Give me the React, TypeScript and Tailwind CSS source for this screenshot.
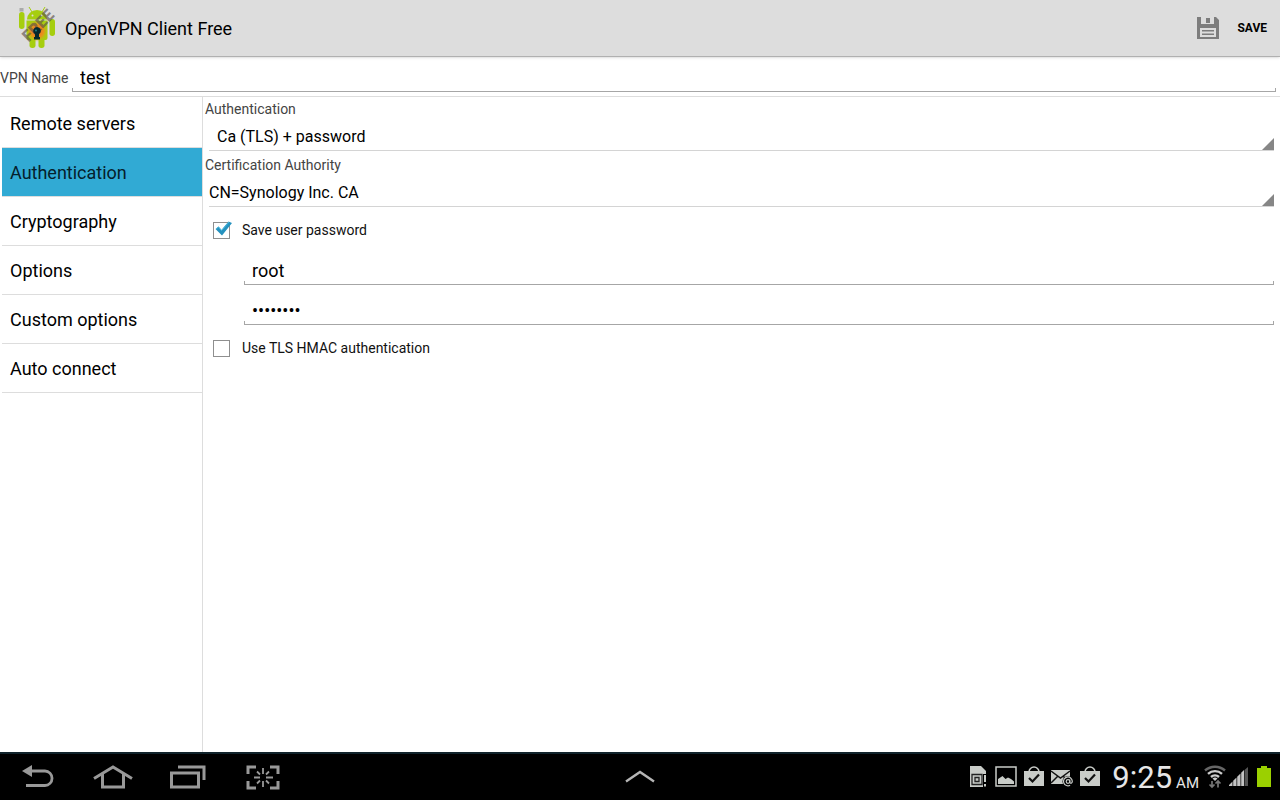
import { useState } from "react";
import type { ReactNode } from "react";

const sections = [
  "Remote servers",
  "Authentication",
  "Cryptography",
  "Options",
  "Custom options",
  "Auto connect",
];

function AppLogo() {
  return (
    <svg width="40" height="42" viewBox="0 0 40 42" aria-hidden="true">
      <defs>
        <radialGradient id="glow">
          <stop offset="0.2" stopColor="#f5761e" />
          <stop offset="0.6" stopColor="#f08a1c" stopOpacity="0.85" />
          <stop offset="1" stopColor="#c4c010" stopOpacity="0" />
        </radialGradient>
      </defs>
      <g fill="#a6ce0f">
        <path d="M10 12.500a10 9.500 0 0 1 20 0z" />
        <path d="M12 0l3 5M28 0l-3 5" stroke="#a6ce0f" strokeWidth="1" />
        <path d="M9.500 13.500h21V31a2 2 0 0 1-2 2h-17a2 2 0 0 1-2-2z" />
        <rect x="2" y="5" width="5.500" height="17" rx="2.700" />
        <rect x="32.500" y="12" width="5.500" height="17" rx="2.700" />
        <rect x="12.500" y="29" width="6" height="12" rx="2.700" />
        <rect x="21.500" y="29" width="6" height="12" rx="2.700" />
      </g>
      <circle cx="15.500" cy="8.500" r="1" fill="#ddd" />
      <circle cx="24.500" cy="8.500" r="1" fill="#ddd" />
      <rect x="2.500" y="1" width="4" height="3.500" fill="#aaa" />
      <circle cx="20" cy="24" r="11" fill="url(#glow)" />
      <text
        x="21"
        y="24"
        textAnchor="middle"
        transform="rotate(-45 21 18.500)"
        fontFamily="Roboto, sans-serif"
        fontWeight="900"
        fontSize="16"
        fill="#5a4f4a"
        fillOpacity="0.65"
      >
        FREE
      </text>
      <path
        d="M20 20a3.800 3.800 0 0 1 2 7V30h1v2.500h-6V30h1v-3a3.800 3.800 0 0 1 2-7z"
        fill="#06282c"
      />
      <circle cx="19" cy="23.500" r="1" fill="#1f7f86" />
    </svg>
  );
}

function SaveIcon() {
  return (
    <svg width="22" height="22" viewBox="0 0 22 22" aria-hidden="true">
      <path
        fill="#7d7d7d"
        fillRule="evenodd"
        d="M0 0h4v8h13V0h2l3 3v19H0zM3 11v9h16v-9z"
      />
      <path fill="#7d7d7d" d="M9 1h4v5H9zM4 7h13v2H4z" />
      <path fill="#7d7d7d" d="M5 13h12v1.500H5zM5 16.500h12V18H5z" />
    </svg>
  );
}

// Holo style underline with short upturned ends
function Underline() {
  return <span className="block h-1 border border-t-0 border-[#a6a6a6]" />;
}

function Spinner({
  id,
  label,
  options,
  inset,
}: {
  id: string;
  label: string;
  options: string[];
  inset?: boolean;
}) {
  return (
    <div>
      <label htmlFor={id} className="block pl-0.5 text-sm leading-5 text-[#444]">
        {label}
      </label>
      <div className="relative ml-1.5 border-b border-[#d4d4d4]">
        <select
          id={id}
          className={`block h-[31px] w-full appearance-none bg-transparent pt-1 text-base text-black outline-none ${
            inset ? "pl-2" : "pl-0"
          }`}
        >
          {options.map((option) => (
            <option key={option}>{option}</option>
          ))}
        </select>
        <svg
          className="pointer-events-none absolute right-0 bottom-0"
          width="12"
          height="12"
          viewBox="0 0 12 12"
        >
          <path d="M12 0v12H0z" fill="#868686" />
        </svg>
      </div>
    </div>
  );
}

function CheckRow({
  label,
  checked,
  onChange,
}: {
  label: string;
  checked: boolean;
  onChange: (value: boolean) => void;
}) {
  return (
    <label className="flex h-8 items-center gap-3 pl-2.5 text-sm text-[#111]">
      <span className="relative flex">
        <input
          type="checkbox"
          checked={checked}
          onChange={(e) => onChange(e.target.checked)}
          className="peer size-[17px] appearance-none border border-[#8f8f8f] bg-white"
        />
        <svg
          className="pointer-events-none absolute -top-0.5 left-0 hidden peer-checked:block"
          width="20"
          height="18"
          viewBox="0 0 20 18"
        >
          <path d="M2.500 9l3-2.500L8.500 10l7-8.500L19 3 9 15.500z" fill="#2592bf" />
          <path d="M3 9l2.500-2L8.500 10.500l7.500-8.500" fill="none" stroke="#4fb9de" />
        </svg>
      </span>
      {label}
    </label>
  );
}

function NavButton({ label, children }: { label: string; children: ReactNode }) {
  return (
    <button aria-label={label} className="flex h-full w-[75px] items-center justify-center">
      {children}
    </button>
  );
}

function BagIcon() {
  return (
    <svg width="20" height="22" viewBox="0 0 20 22">
      <path d="M5 6a5 5 0 0 1 10 0" fill="none" stroke="#c9ccc8" strokeWidth="1.500" />
      <path d="M0 5h20v15H0z" fill="#c9ccc8" />
      <path d="M5 12l3.500 3.500L15 8.500" fill="none" stroke="#111" strokeWidth="2.200" />
    </svg>
  );
}

function SystemBar() {
  return (
    <footer className="grid h-12 grid-cols-[1fr_auto_1fr] items-center border-t-2 border-[#10232b] bg-black">
      <div className="flex h-full items-center">
        <NavButton label="Back">
          <svg width="32" height="24" viewBox="0 0 32 24">
            <path d="M0 6L10 0v12z" fill="#999" />
            <path d="M9 6h14a7 7.200 0 0 1 0 14.500H4" fill="none" stroke="#999" strokeWidth="2.800" />
          </svg>
        </NavButton>
        <NavButton label="Home">
          <svg width="40" height="24" viewBox="0 0 40 24">
            <path
              d="M1 13.500L20 2l19 11.500M9.500 9v13h21V9"
              fill="none"
              stroke="#999"
              strokeWidth="3"
            />
          </svg>
        </NavButton>
        <NavButton label="Recent apps">
          <svg width="36" height="24" viewBox="0 0 36 24">
            <path
              d="M1.500 8h27v14h-27zM8 2h26v13"
              fill="none"
              stroke="#999"
              strokeWidth="3"
            />
          </svg>
        </NavButton>
        <NavButton label="Screenshot">
          <svg width="34" height="25" viewBox="0 0 34 25">
            <path
              d="M10 2H2v7M24 2h8v7M2 16v7h8M32 16v7h-8"
              fill="none"
              stroke="#999"
              strokeWidth="3"
            />
            <path
              d="M17 3v6M17 16v6M8 12.500h6M20 12.500h7M11 6.500l3 3M23 6.500l-3 3M11 18.500l3-3M23 18.500l-3-3"
              stroke="#999"
              strokeWidth="1.800"
            />
          </svg>
        </NavButton>
      </div>

      <button aria-label="Open tray">
        <svg width="30" height="14" viewBox="0 0 30 14">
          <path d="M1 11.500L15 2l14 9.500" fill="none" stroke="#b5b5b5" strokeWidth="2.400" />
        </svg>
      </button>

      <div className="flex items-center justify-end pr-[9px] text-[#e6e6e6]">
        <div className="flex">
          <span className="flex w-7 justify-center">
            <svg width="17" height="22" viewBox="0 0 17 22">
              <path d="M0 0h11l5 5v16H0z" fill="#c9ccc8" />
              <path d="M2 8.500h10v10H2zM5 11.500h4v4H5z" fill="none" stroke="#222" strokeWidth="1.300" />
              <path d="M13 8h4v14h-4z" fill="#000" />
              <path d="M14 9h2v7h-2zM14 18h2v2.500h-2z" fill="#c9ccc8" />
            </svg>
          </span>
          <span className="flex w-7 justify-center">
            <svg width="22" height="22" viewBox="0 0 22 22">
              <path d="M1 1h20v19H1z" fill="none" stroke="#c9ccc8" strokeWidth="1.500" />
              <path d="M3 18v-5l4.500-3 3 3 2.500-1.500 3 1.500 3 2.500V18z" fill="#c9ccc8" />
            </svg>
          </span>
          <span className="flex w-7 justify-center">
            <BagIcon />
          </span>
          <span className="flex w-7 justify-center">
            <svg width="24" height="22" viewBox="0 0 24 22">
              <path d="M1 4h19v14H1z" fill="#c9ccc8" />
              <path d="M1 5l9.500 7L20 5M1 17l6.500-6.500M20 17l-6.500-6.500" fill="none" stroke="#111" strokeWidth="1.500" />
              <circle cx="18" cy="15.500" r="5.500" fill="#000" />
              <circle cx="18" cy="15.500" r="1.800" fill="none" stroke="#c9ccc8" strokeWidth="1.200" />
              <path
                d="M19.800 13.500v2.500q.2 1.500 1.500 1.200 1-.5 1-2a4.400 4.400 0 1 0-2.200 4"
                fill="none"
                stroke="#c9ccc8"
                strokeWidth="1.200"
              />
            </svg>
          </span>
          <span className="flex w-7 justify-center">
            <BagIcon />
          </span>
        </div>
        <div className="ml-2 flex items-baseline gap-1">
          <span className="pt-0.5 text-[31px] leading-9">9:25</span>
          <span className="text-[15px]">AM</span>
        </div>
        <svg className="ml-[5px]" width="22" height="24" viewBox="0 0 22 24">
          <g fill="none" strokeWidth="2.400">
            <path d="M1 5.500a15 15 0 0 1 20 0" stroke="#666" />
            <path d="M4 8.800a10.500 10.500 0 0 1 14 0" stroke="#ccc" />
            <path d="M7 12a6 6 0 0 1 8 0" stroke="#ccc" />
          </g>
          <path d="M8.500 13.500L11 16l2.500-2.500a4 4 0 0 0-5 0z" fill="#ccc" />
          <path
            d="M8 16v6.500M5.500 19.500L8 22l2.500-2.500M14 22.500V16M11.500 18.500L14 16l2.500 2.500"
            fill="none"
            stroke="#777"
            strokeWidth="1.700"
          />
        </svg>
        <svg className="ml-[3px]" width="19" height="20" viewBox="0 0 19 20">
          <path d="M0 19v-1l3.500-3.500V19zM4.200 19v-5.200l3.300-3.300V19zM8.200 19V9.800l3.300-3.300V19zM12.200 19V5.800L15 3v16z" fill="#c4c4c4" />
          <path d="M15.500 19V3L19 0v19z" fill="#555" />
        </svg>
        <svg className="ml-[9px]" width="14" height="22" viewBox="0 0 14 22">
          <path d="M4 0h6v2h4v19H0V2h4z" fill="#9bd000" />
        </svg>
      </div>
    </footer>
  );
}

function App() {
  const [name, setName] = useState("test");
  const [active, setActive] = useState("Authentication");
  const [savePassword, setSavePassword] = useState(true);
  const [useHmac, setUseHmac] = useState(false);
  const [user, setUser] = useState("root");
  const [password, setPassword] = useState("password");

  return (
    <div className="flex min-h-screen flex-col bg-white font-['Roboto',sans-serif] text-black">
      {/* Action bar */}
      <header className="flex h-[57px] items-center justify-between border-b border-[#b0b0b0] bg-[#ddd] pr-[13px] pl-[17px] shadow-sm">
        <div className="flex items-center gap-2">
          <AppLogo />
          <h1 className="pt-0.5 text-lg">OpenVPN Client Free</h1>
        </div>
        <button className="flex items-center gap-[18px] text-xs font-bold">
          <SaveIcon />
          SAVE
        </button>
      </header>

      {/* Profile name */}
      <div className="flex h-10 items-end border-b border-[#ddd] pr-1 pb-1">
        <label htmlFor="vpn-name" className="w-[72px] pb-1 text-sm text-[#444]">
          VPN Name
        </label>
        <div className="flex-1">
          <input
            id="vpn-name"
            value={name}
            onChange={(e) => setName(e.target.value)}
            className="block h-6 w-full bg-transparent px-2 pt-0.5 text-lg leading-5 outline-none"
          />
          <Underline />
        </div>
      </div>

      <div className="flex flex-1">
        {/* Sections */}
        <nav className="w-[203px] border-r border-[#ddd] pt-0.5 pl-0.5">
          {sections.map((section) => (
            <button
              key={section}
              onClick={() => setActive(section)}
              className={`block h-[49px] w-full border-b border-[#ddd] px-2 pt-0.5 text-left text-lg ${
                active === section ? "bg-[#31aad4] text-[#05202b]" : ""
              }`}
            >
              {section}
            </button>
          ))}
        </nav>

        {/* Authentication settings */}
        <main className="flex-1 pt-0.5 pr-1.5">
          <div className="flex flex-col gap-1">
            <Spinner id="auth" label="Authentication" options={["Ca (TLS) + password"]} inset />
            <Spinner
              id="ca"
              label="Certification Authority"
              options={["CN=Synology Inc. CA"]}
            />
          </div>

          <div className="mt-[7px]">
            <CheckRow label="Save user password" checked={savePassword} onChange={setSavePassword} />
            <div className="ml-[41px] pt-[7px]">
              <input
                aria-label="User name"
                value={user}
                onChange={(e) => setUser(e.target.value)}
                className="block h-7 w-full bg-transparent px-2 pt-1.5 text-lg leading-5 outline-none"
              />
              <Underline />
              <input
                type="password"
                aria-label="Password"
                value={password}
                onChange={(e) => setPassword(e.target.value)}
                className="mt-2 block h-7 w-full bg-transparent px-2 pt-1.5 text-lg leading-5 outline-none"
              />
              <Underline />
            </div>
            <div className="mt-[7px]">
              <CheckRow label="Use TLS HMAC authentication" checked={useHmac} onChange={setUseHmac} />
            </div>
          </div>
        </main>
      </div>

      <SystemBar />
    </div>
  );
}

export default App;
